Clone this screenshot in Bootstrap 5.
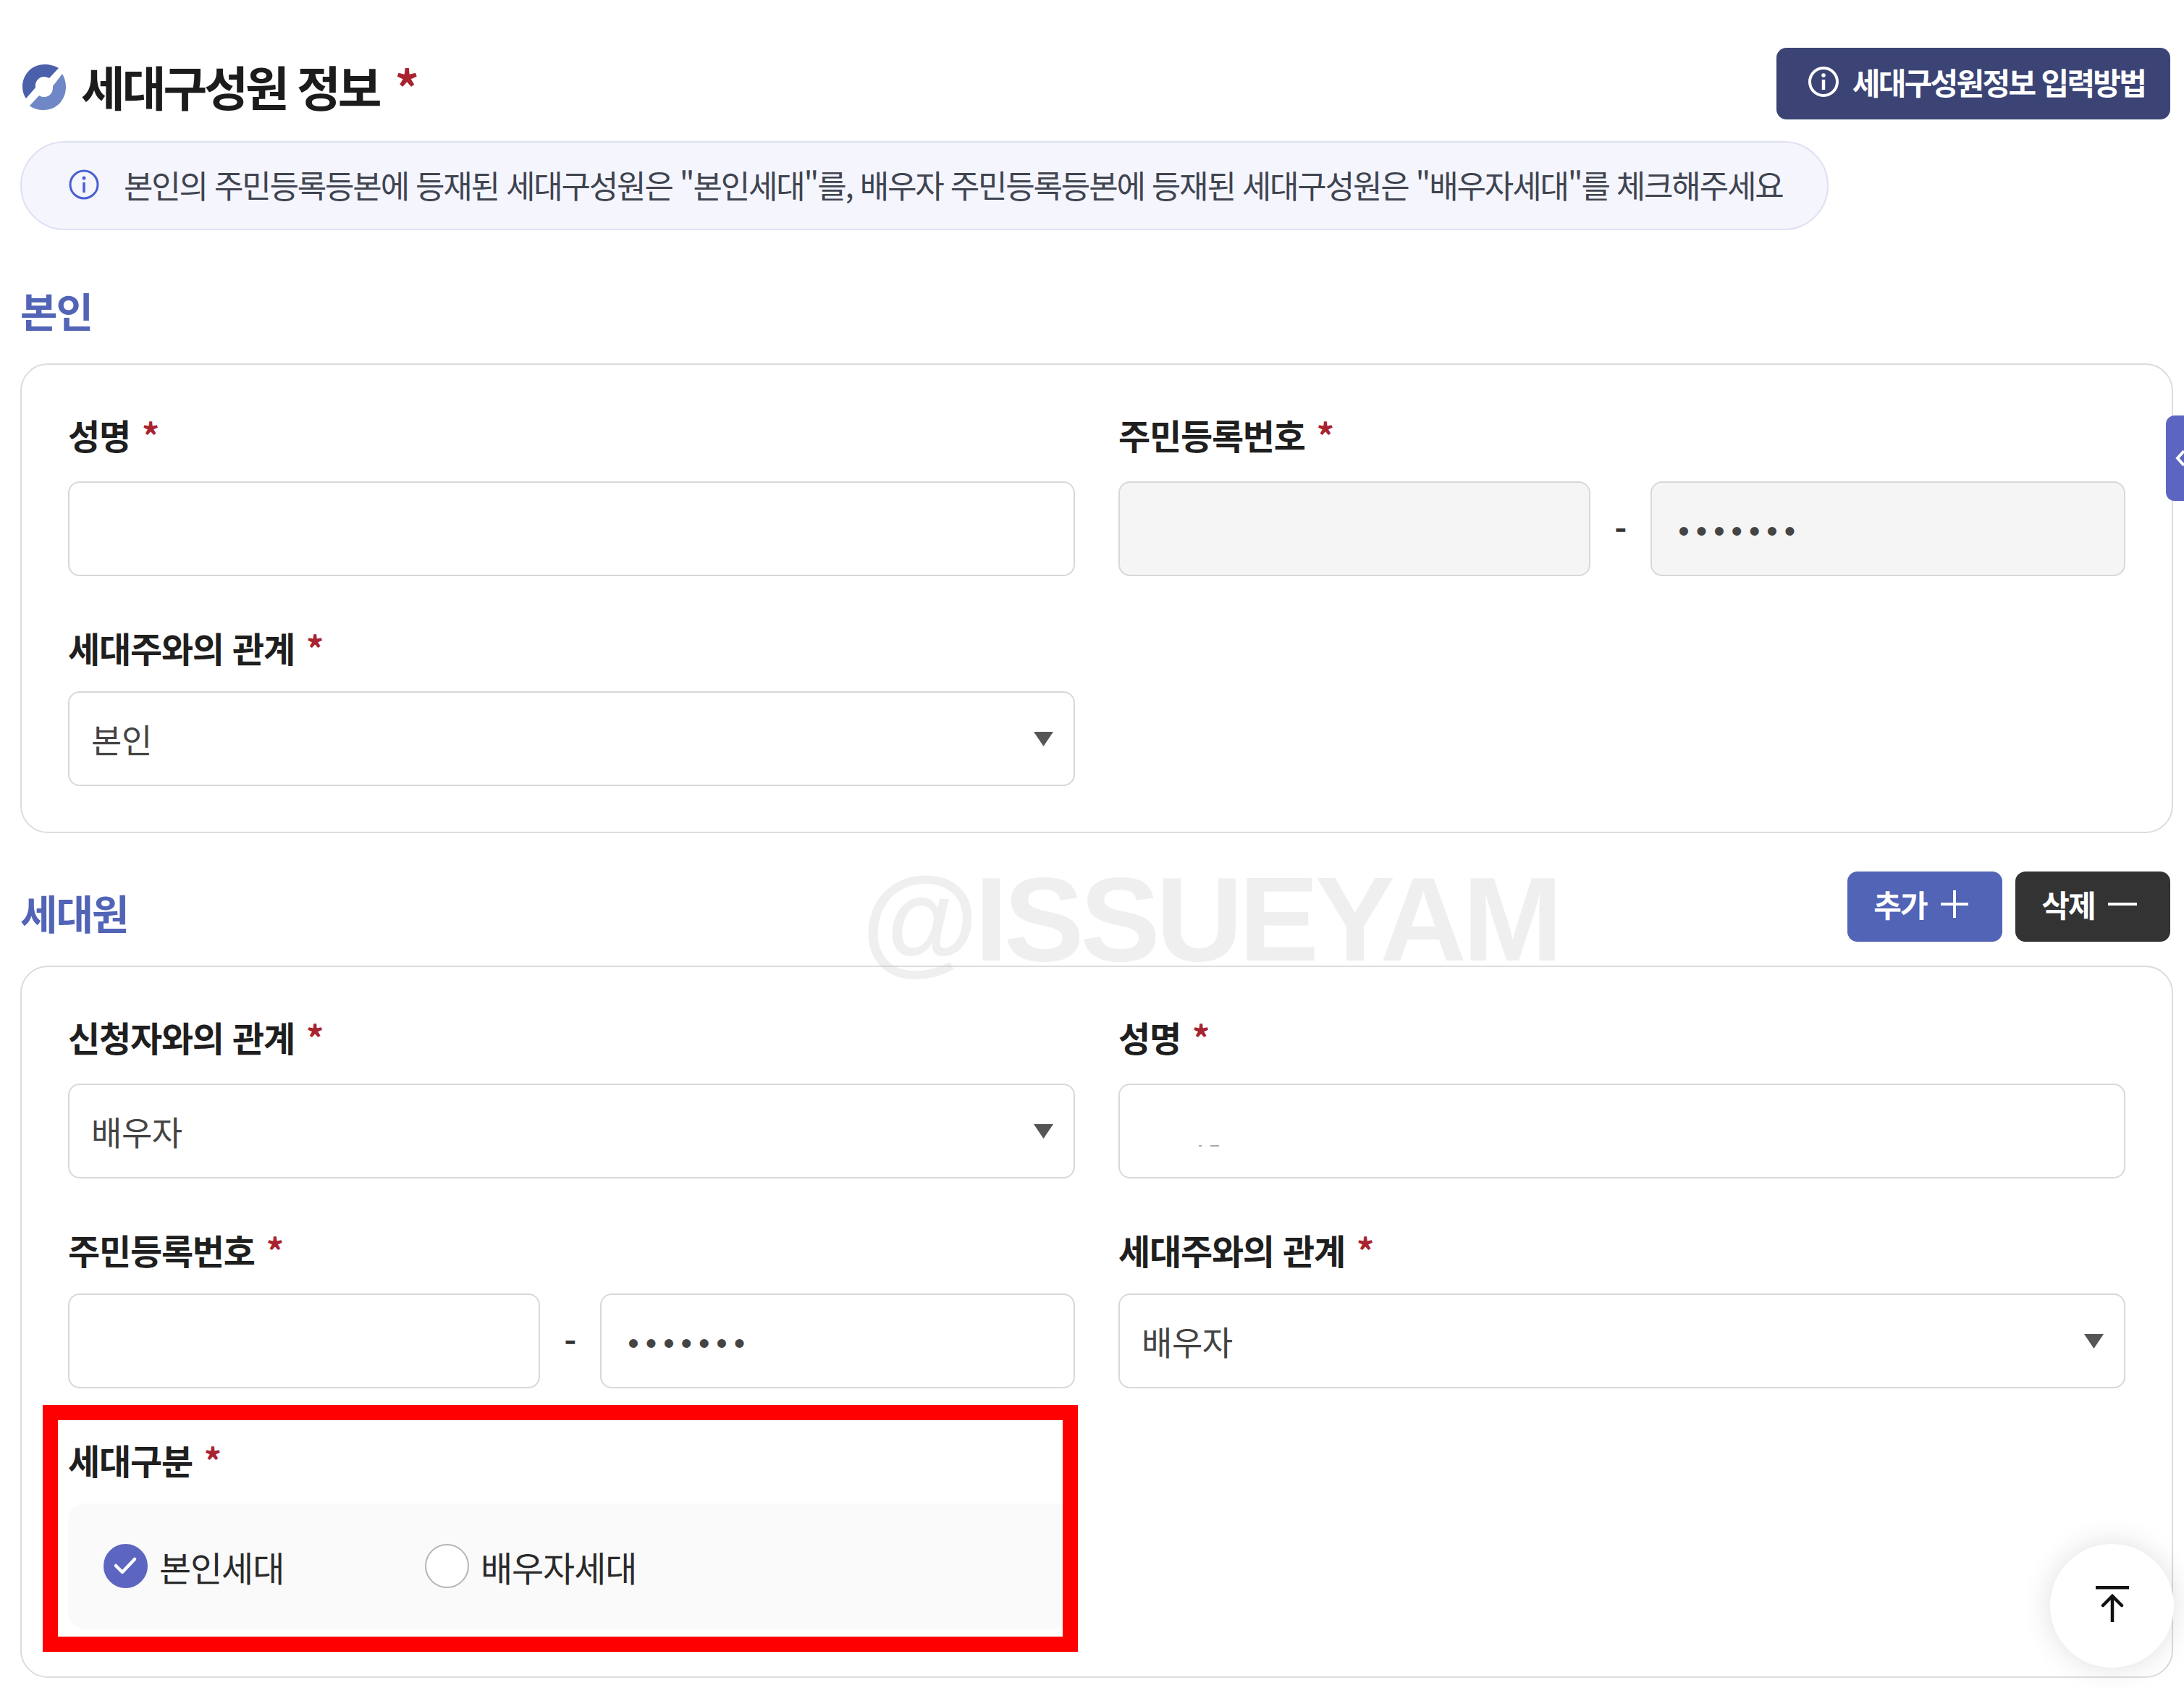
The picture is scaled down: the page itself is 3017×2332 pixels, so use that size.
<!DOCTYPE html>
<html lang="ko">
<head>
<meta charset="utf-8">
<title>세대구성원 정보</title>
<link href="https://cdn.jsdelivr.net/npm/bootstrap@5.3.0/dist/css/bootstrap.min.css" rel="stylesheet">
<style>
html,body{background:#fff;}
body{font-family:"Noto Sans CJK KR","Noto Sans",sans-serif;color:#222;width:3017px;height:2332px;overflow:hidden;position:relative;}
.page-wrap{padding:66px 15px 0 28px;}
.title-row{height:99px;}
.page-title{font-size:66px;font-weight:700;line-height:1;letter-spacing:-4px;color:#1c1c1c;margin:0;padding-top:4px;}
.req{color:#a8232f;font-weight:700;margin-left:16px;font-family:"Noto Sans CJK KR",sans-serif;}
.page-title .req{margin-left:22px;}
.title-icon{width:62px;height:64px;margin:8px 20px 0 2px;flex:none;}
.how-btn{background:#3b4475;border:0;color:#fff;font-size:42px;font-weight:700;letter-spacing:-2.7px;width:544px;height:99px;border-radius:14px;margin-right:4px;padding:0 0 6px 8px;gap:18px;}
.how-btn:hover{background:#3b4475;color:#fff;}
.info-pill{margin-top:30px;width:2498px;height:123px;background:#f4f5fd;border:2px solid #dfe0f3;border-radius:62px;padding:0 0 4px 65px;gap:34px;font-size:44px;letter-spacing:-2.2px;color:#3f4450;white-space:nowrap;}
.sec-name{font-size:56px;font-weight:700;color:#5264b6;margin:0;line-height:1;letter-spacing:-2px;}
.sec-self{margin-top:66px;height:92px;margin-bottom:26px;padding-bottom:5px;}
.sec-member{margin-top:53px;height:97px;margin-bottom:33px;padding-right:4px;}
.sec-member .sec-name{padding-top:15px;}
.box{background:transparent;border:2px solid #dcdcdc;border-radius:38px;padding:68px 64px 63px;position:relative;}
.box-tall{padding-bottom:66px;}
.box-row{--bs-gutter-x:60px;--bs-gutter-y:0;}
.fld{margin-bottom:70px;}
.fld-last{margin-bottom:0;}
.fld-label{display:block;font-size:48px;font-weight:700;letter-spacing:-1.2px;line-height:57px;height:60px;color:#1f1f1f;margin:0 0 33px;}
.fld-label.near{margin-bottom:29px;}
.fld-input.form-control,.fld-input.form-select{height:131px;border:2px solid #d8d8d8;border-radius:16px;font-size:46px;color:#444;padding:0 30px;letter-spacing:-.4px;box-shadow:none;}
.fld-input.form-control:disabled{background:#f5f5f5;opacity:1;}
.fld-input.form-select{background-size:27px 20px;background-position:right 28px center;padding-right:70px;background-image:url("data:image/svg+xml,%3Csvg xmlns='http://www.w3.org/2000/svg' viewBox='0 0 27 20'%3E%3Cpath fill='%23555' d='M0 0h27L13.500 20z'/%3E%3C/svg%3E");}
.fld-input.form-control.mask{letter-spacing:9px;font-size:44px;padding:6px 30px 0 36px;font-family:"Liberation Sans",sans-serif;}
.dash{flex:none;width:83px;text-align:center;font-size:46px;font-weight:700;color:#333;}
.pick-panel{height:173px;background:#fafafa;border-radius:22px;padding-left:49px;gap:0;}
.pick-item{display:flex;align-items:center;margin:0;padding:0;min-height:0;font-size:48px;letter-spacing:-1.1px;color:#2a2a2a;}
.pick-one{width:444px;}
.pick-item .form-check-input{float:none;width:61px;height:61px;margin:0 16px 0 0;border:2px solid #b5b5b5;background-color:#fff;box-shadow:none;flex:none;}
.pick-item .form-check-input:checked{background-color:#5c66c0;border-color:#5c66c0;background-size:61px 61px;background-image:url("data:image/svg+xml,%3Csvg xmlns='http://www.w3.org/2000/svg' viewBox='0 0 61 61'%3E%3Cpath fill='none' stroke='%23fff' stroke-width='4.500' stroke-linecap='round' stroke-linejoin='round' d='M17 30l9 9 17-18'/%3E%3C/svg%3E");}
.act-wrap{gap:18px;}
.act-btn{width:214px;height:97px;border:0;border-radius:14px;color:#fff;font-size:42px;font-weight:700;letter-spacing:-2px;padding:0 10px 8px 0;gap:18px;}
.act-add,.act-add:hover{background:#5264b6;color:#fff;}
.act-del,.act-del:hover{background:#333;color:#fff;}
.red-mark{position:absolute;left:-35px;top:-47px;width:1430px;height:341px;border:21px solid #f00;pointer-events:none;}
.last-fld{position:relative;}
.speck{position:absolute;height:2px;background:#aaa;top:1582px;}
.speck-a{left:1656px;width:4px;}
.speck-b{left:1672px;width:12px;}
.side-tab{position:absolute;left:2992px;top:574px;width:40px;height:118px;background:#5c66c0;border-radius:12px;}
.side-tab svg{position:absolute;left:13px;top:47px;}
.to-top{position:absolute;left:2832px;top:2133px;width:171px;height:171px;border-radius:50%;background:#fff;border:0;box-shadow:0 0 40px rgba(0,0,0,.13);padding:0 0 6px;}
.water{position:absolute;left:1190px;top:1170px;font-family:"Liberation Sans",sans-serif;font-weight:700;font-size:166px;line-height:1.2;letter-spacing:-5.6px;color:rgba(190,190,190,.25);pointer-events:none;white-space:nowrap;}
</style>
</head>
<body>
<div class="page-wrap">
  <div class="title-row d-flex justify-content-between align-items-center">
    <div class="d-flex align-items-center">
      <svg class="title-icon" viewBox="0 0 62 64" aria-hidden="true">
        <path fill="#4b60aa" d="M31 1C14 1 1 15 1 32c0 6 2 12 5 16L19 33c-1-8 4-15 12-15 3 0 5 1 7 2L51 6C46 3 39 1 31 1z"/>
        <path fill="#6f87c6" d="M56 14 43 31c1 8-4 15-12 15-3 0-5-1-7-2L11 58c5 4 12 6 20 6 17 0 30-14 30-32 0-7-2-13-5-18z"/>
      </svg>
      <h1 class="page-title">세대구성원 정보<span class="req">*</span></h1>
    </div>
    <button type="button" class="btn how-btn d-flex align-items-center justify-content-center">
      <svg width="44" height="44" viewBox="0 0 44 44" aria-hidden="true"><circle cx="22" cy="22" r="19" fill="none" stroke="#fff" stroke-width="4"/><circle cx="22" cy="13" r="2.800" fill="#fff"/><path d="M22 19v14" stroke="#fff" stroke-width="4.500"/></svg>
      <span>세대구성원정보 입력방법</span>
    </button>
  </div>

  <div class="info-pill d-flex align-items-center">
    <svg width="42" height="44" viewBox="0 0 42 44" class="flex-shrink-0" aria-hidden="true"><circle cx="21" cy="22" r="19" fill="none" stroke="#4a5fd0" stroke-width="3"/><circle cx="21" cy="13" r="2.500" fill="#4a5fd0"/><path d="M21 19v14" stroke="#4a5fd0" stroke-width="3.500"/></svg>
    <span>본인의 주민등록등본에 등재된 세대구성원은 "본인세대"를, 배우자 주민등록등본에 등재된 세대구성원은 "배우자세대"를 체크해주세요</span>
  </div>

  <div class="sec-self d-flex align-items-center">
    <h2 class="sec-name">본인</h2>
  </div>

  <section class="box">
    <div class="row box-row">
      <div class="col-6 fld">
        <label class="fld-label">성명<span class="req">*</span></label>
        <input type="text" class="form-control fld-input">
      </div>
      <div class="col-6 fld">
        <label class="fld-label">주민등록번호<span class="req">*</span></label>
        <div class="d-flex align-items-center">
          <input type="text" class="form-control fld-input" disabled>
          <span class="dash">-</span>
          <input type="password" class="form-control fld-input mask" value="1234567" disabled>
        </div>
      </div>
      <div class="col-6 fld fld-last">
        <label class="fld-label near">세대주와의 관계<span class="req">*</span></label>
        <select class="form-select fld-input"><option>본인</option></select>
      </div>
    </div>
  </section>

  <div class="sec-member d-flex justify-content-between align-items-center">
    <h2 class="sec-name">세대원</h2>
    <div class="d-flex act-wrap">
      <button type="button" class="btn act-btn act-add d-flex align-items-center justify-content-center">추가
        <svg width="40" height="40" viewBox="0 0 40 40" aria-hidden="true"><path d="M20 1v38M1 20h38" stroke="#fff" stroke-width="4"/></svg>
      </button>
      <button type="button" class="btn act-btn act-del d-flex align-items-center justify-content-center">삭제
        <svg width="40" height="40" viewBox="0 0 40 40" aria-hidden="true"><path d="M0 20h40" stroke="#fff" stroke-width="4"/></svg>
      </button>
    </div>
  </div>

  <section class="box box-tall">
    <div class="row box-row">
      <div class="col-6 fld">
        <label class="fld-label">신청자와의 관계<span class="req">*</span></label>
        <select class="form-select fld-input"><option>배우자</option></select>
      </div>
      <div class="col-6 fld">
        <label class="fld-label">성명<span class="req">*</span></label>
        <input type="text" class="form-control fld-input">
      </div>
      <div class="col-6 fld">
        <label class="fld-label near">주민등록번호<span class="req">*</span></label>
        <div class="d-flex align-items-center">
          <input type="text" class="form-control fld-input">
          <span class="dash">-</span>
          <input type="password" class="form-control fld-input mask" value="1234567">
        </div>
      </div>
      <div class="col-6 fld">
        <label class="fld-label near">세대주와의 관계<span class="req">*</span></label>
        <select class="form-select fld-input"><option>배우자</option></select>
      </div>
      <div class="col-6 fld fld-last">
        <div class="last-fld">
          <label class="fld-label near">세대구분<span class="req">*</span></label>
          <div class="pick-panel d-flex align-items-center">
            <label class="pick-item pick-one"><input class="form-check-input" type="radio" name="household" checked>본인세대</label>
            <label class="pick-item"><input class="form-check-input" type="radio" name="household">배우자세대</label>
          </div>
          <div class="red-mark"></div>
        </div>
      </div>
    </div>
  </section>
</div>

<div class="speck speck-a"></div>
<div class="speck speck-b"></div>
<div class="water">@ISSUEYAM</div>
<div class="side-tab"><svg width="14" height="24" viewBox="0 0 14 24" aria-hidden="true"><path d="M12 2 3 12l9 10" fill="none" stroke="#fff" stroke-width="4"/></svg></div>
<button type="button" class="to-top" aria-label="맨 위로">
  <svg width="48" height="50" viewBox="0 0 48 50" aria-hidden="true"><path d="M1 2h46" stroke="#111" stroke-width="5"/><path d="M24 50V14M11 27 24 14l13 13" fill="none" stroke="#111" stroke-width="4.500" stroke-linecap="round"/></svg>
</button>
<script src="https://cdn.jsdelivr.net/npm/bootstrap@5.3.0/dist/js/bootstrap.bundle.min.js"></script>
</body>
</html>
